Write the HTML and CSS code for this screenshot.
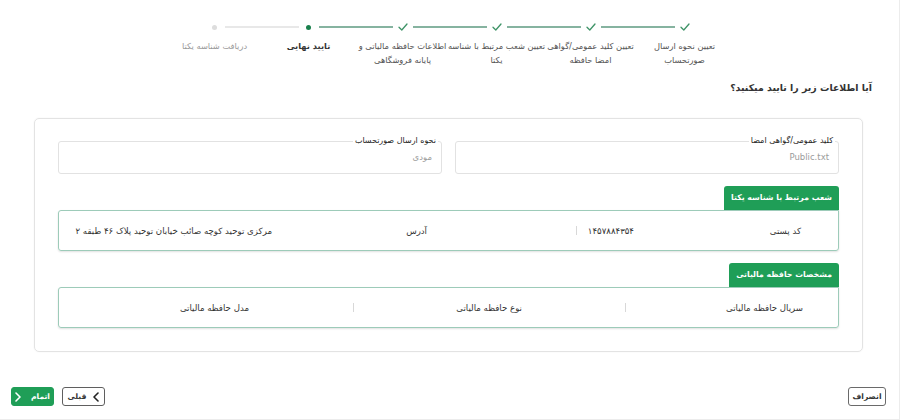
FILE: index.html
```html
<!DOCTYPE html>
<html lang="fa" dir="rtl">
<head>
<meta charset="utf-8">
<title>تایید نهایی</title>
<link rel="stylesheet" href="styles.css">
</head>
<body>
<div class="page">
  <ol class="stepper">
    <li class="step done first">
      <div class="track"><span class="seg seg-r"></span><span class="ico"><svg viewBox="0 0 10 8" width="10" height="8"><polyline points="1,4.2 3.8,7 9,1" /></svg></span><span class="seg seg-l on"></span></div>
      <div class="label">تعیین نحوه ارسال صورتحساب</div>
    </li>
    <li class="step done">
      <div class="track"><span class="seg seg-r on"></span><span class="ico"><svg viewBox="0 0 10 8" width="10" height="8"><polyline points="1,4.2 3.8,7 9,1" /></svg></span><span class="seg seg-l on"></span></div>
      <div class="label">تعیین کلید عمومی/گواهی امضا حافظه</div>
    </li>
    <li class="step done">
      <div class="track"><span class="seg seg-r on"></span><span class="ico"><svg viewBox="0 0 10 8" width="10" height="8"><polyline points="1,4.2 3.8,7 9,1" /></svg></span><span class="seg seg-l on"></span></div>
      <div class="label">تعیین شعب مرتبط با شناسه یکتا</div>
    </li>
    <li class="step done">
      <div class="track"><span class="seg seg-r on"></span><span class="ico"><svg viewBox="0 0 10 8" width="10" height="8"><polyline points="1,4.2 3.8,7 9,1" /></svg></span><span class="seg seg-l on"></span></div>
      <div class="label">اطلاعات حافظه مالیاتی و پایانه فروشگاهی</div>
    </li>
    <li class="step active">
      <div class="track"><span class="seg seg-r on"></span><span class="ico"><span class="dot"></span></span><span class="seg seg-l"></span></div>
      <div class="label">تایید نهایی</div>
    </li>
    <li class="step pending last">
      <div class="track"><span class="seg seg-r"></span><span class="ico"><span class="dot"></span></span><span class="seg seg-l"></span></div>
      <div class="label">دریافت شناسه یکتا</div>
    </li>
  </ol>

  <div class="content">
    <h1 class="question">آیا اطلاعات زیر را تایید میکنید؟</h1>

    <div class="card">
      <div class="fields">
        <fieldset class="field">
          <legend>کلید عمومی/گواهی امضا</legend>
          <div class="field-value" dir="ltr">Public.txt</div>
        </fieldset>
        <fieldset class="field">
          <legend>نحوه ارسال صورتحساب</legend>
          <div class="field-value">مودی</div>
        </fieldset>
      </div>

      <section class="group">
        <div class="tab">شعب مرتبط با شناسه یکتا</div>
        <div class="box">
          <div class="row branch">
            <span class="c postal-k">کد پستی</span>
            <span class="c postal-v">۱۴۵۷۸۸۴۳۵۴</span>
            <span class="sep"></span>
            <span class="c addr-k">آدرس</span>
            <span class="c addr-v">مرکزی توحید کوچه صائب خیابان توحید پلاک ۴۶ طبقه ۲</span>
          </div>
        </div>
      </section>

      <section class="group group2">
        <div class="tab">مشخصات حافظه مالیاتی</div>
        <div class="box">
          <div class="row memory">
            <span class="c serial">سریال حافظه مالیاتی</span>
            <span class="sep"></span>
            <span class="c type">نوع حافظه مالیاتی</span>
            <span class="sep"></span>
            <span class="c model">مدل حافظه مالیاتی</span>
          </div>
        </div>
      </section>
    </div>
  </div>

  <div class="footer">
    <button class="btn btn-cancel" type="button">انصراف</button>
    <div class="nav">
      <button class="btn btn-prev" type="button"><svg viewBox="0 0 6 10" width="6" height="10"><polyline points="5,1 1,5 5,9" /></svg><span>قبلی</span></button>
      <button class="btn btn-finish" type="button"><span>اتمام</span><svg viewBox="0 0 6 10" width="6" height="10"><polyline points="1,1 5,5 1,9" /></svg></button>
    </div>
  </div>
</div>
</body>
</html>
```

FILE: styles.css
```css
* { box-sizing: border-box; }

html, body {
  margin: 0;
  padding: 0;
  background: #ffffff;
}

body {
  font-family: "DejaVu Sans", "Noto Sans", sans-serif;
  color: #333;
}

.page {
  width: 900px;
  height: 420px;
  direction: rtl;
  border-right: 1px solid #ececec;
  border-bottom: 1px solid #ececec;
  display: flex;
  flex-direction: column;
}

/* ---------- stepper ---------- */
.stepper {
  list-style: none;
  margin: 0;
  padding: 21px 0 0;
  display: flex;
  justify-content: center;
}

.step {
  width: 94px;
  display: flex;
  flex-direction: column;
  align-items: center;
}

.track {
  width: 100%;
  height: 12px;
  display: flex;
  align-items: center;
}

.seg {
  flex: 1;
  height: 2px;
  background: #e8e8e8;
}
.seg.on { background: #86b3a0; }
.seg-r { margin-left: 5px; }
.seg-l { margin-right: 5px; }
.first .seg-r, .last .seg-l { background: transparent; }

.ico {
  width: 10px;
  height: 10px;
  display: flex;
  align-items: center;
  justify-content: center;
}
.ico svg polyline {
  fill: none;
  stroke: #3f9468;
  stroke-width: 1.3;
  stroke-linecap: round;
  stroke-linejoin: round;
}
.dot {
  width: 5px;
  height: 5px;
  border-radius: 50%;
  background: #19804c;
}
.pending .dot { background: #dddddd; }

.label {
  margin-top: 6px;
  width: 98px;
  text-align: center;
  font-size: 8.3px;
  line-height: 14px;
  color: #555;
}
.active .label { font-weight: bold; color: #333; }
.pending .label { color: #9a9a9a; }

/* ---------- content ---------- */
.content {
  padding: 0 36px 0 34px;
}

.question {
  margin: 13px -9px 0 0;
  font-size: 9.4px;
  line-height: 16px;
  font-weight: bold;
  color: #333;
}

.card {
  margin-top: 22px;
  border: 1px solid #e3e3e3;
  border-radius: 5px;
  box-shadow: 0 0 2px rgba(0, 0, 0, 0.05);
  padding: 16px 23px 23px 23px;
}

.fields {
  display: flex;
  gap: 13px;
}

.field {
  flex: 1;
  margin: 0;
  height: 39px;
  border: 1px solid #e2e2e2;
  border-radius: 3px;
  padding: 0 9px;
  min-width: 0;
}
.field legend {
  padding: 0 2px;
  margin-right: -6px;
  font-size: 8px;
  line-height: 12px;
  color: #222;
  font-weight: normal;
}
.field-value {
  text-align: right;
  font-size: 8.5px;
  line-height: 12px;
  margin-top: 4px;
  color: #9b9b9b;
}

.group {
  margin-top: 12px;
  display: flex;
  flex-direction: column;
  align-items: flex-start;
}

.tab {
  height: 24px;
  line-height: 24px;
  padding: 0 7px;
  background: #1f9e57;
  color: #fff;
  font-size: 7.8px;
  font-weight: bold;
  border-radius: 3px 3px 0 0;
}

.box {
  width: 100%;
  height: 41px;
  border: 1px solid #9dcbb9;
  border-radius: 3px 0 3px 3px;
  box-shadow: 0 1px 2px rgba(0, 0, 0, 0.12);
}

.row {
  height: 100%;
  display: flex;
  align-items: center;
  padding-left: 20px;
  font-size: 8.6px;
  color: #333;
}
.c { white-space: nowrap; flex: none; text-align: right; }

.sep {
  width: 1px;
  height: 9px;
  background: #d8d8d8;
  flex: none;
}

.postal-k { margin-right: 37px; width: 167px; }
.postal-v { width: 57px; }
.addr-k { margin-right: 149px; width: 155px; }

.serial { margin-right: 35px; width: 177px; }
.type { margin-right: 103px; width: 168px; }
.model { margin-right: 104px; }

/* ---------- footer ---------- */
.footer {
  margin-top: 35px;
  padding: 0 13px 0 11px;
  display: flex;
  justify-content: space-between;
  align-items: center;
}

.nav {
  display: flex;
  gap: 8px;
}

.btn {
  height: 19px;
  border-radius: 3px;
  font-family: inherit;
  font-size: 7.6px;
  font-weight: bold;
  display: flex;
  align-items: center;
  justify-content: center;
  padding: 0;
  cursor: pointer;
}
.btn svg polyline {
  fill: none;
  stroke-width: 1.6;
  stroke-linecap: round;
  stroke-linejoin: round;
}

.btn-cancel {
  width: 38px;
  background: #fff;
  border: 1px solid #6a6a6a;
  color: #333;
}

.btn-prev {
  width: 43px;
  gap: 7px;
  background: #fff;
  border: 1px solid #5f5f5f;
  color: #333;
}
.btn-prev svg polyline { stroke: #222; }

.btn-finish {
  width: 43px;
  gap: 10px;
  background: #1f9e57;
  border: 1px solid #1f9e57;
  color: #fff;
}
.btn-finish svg polyline { stroke: #fff; }
```
